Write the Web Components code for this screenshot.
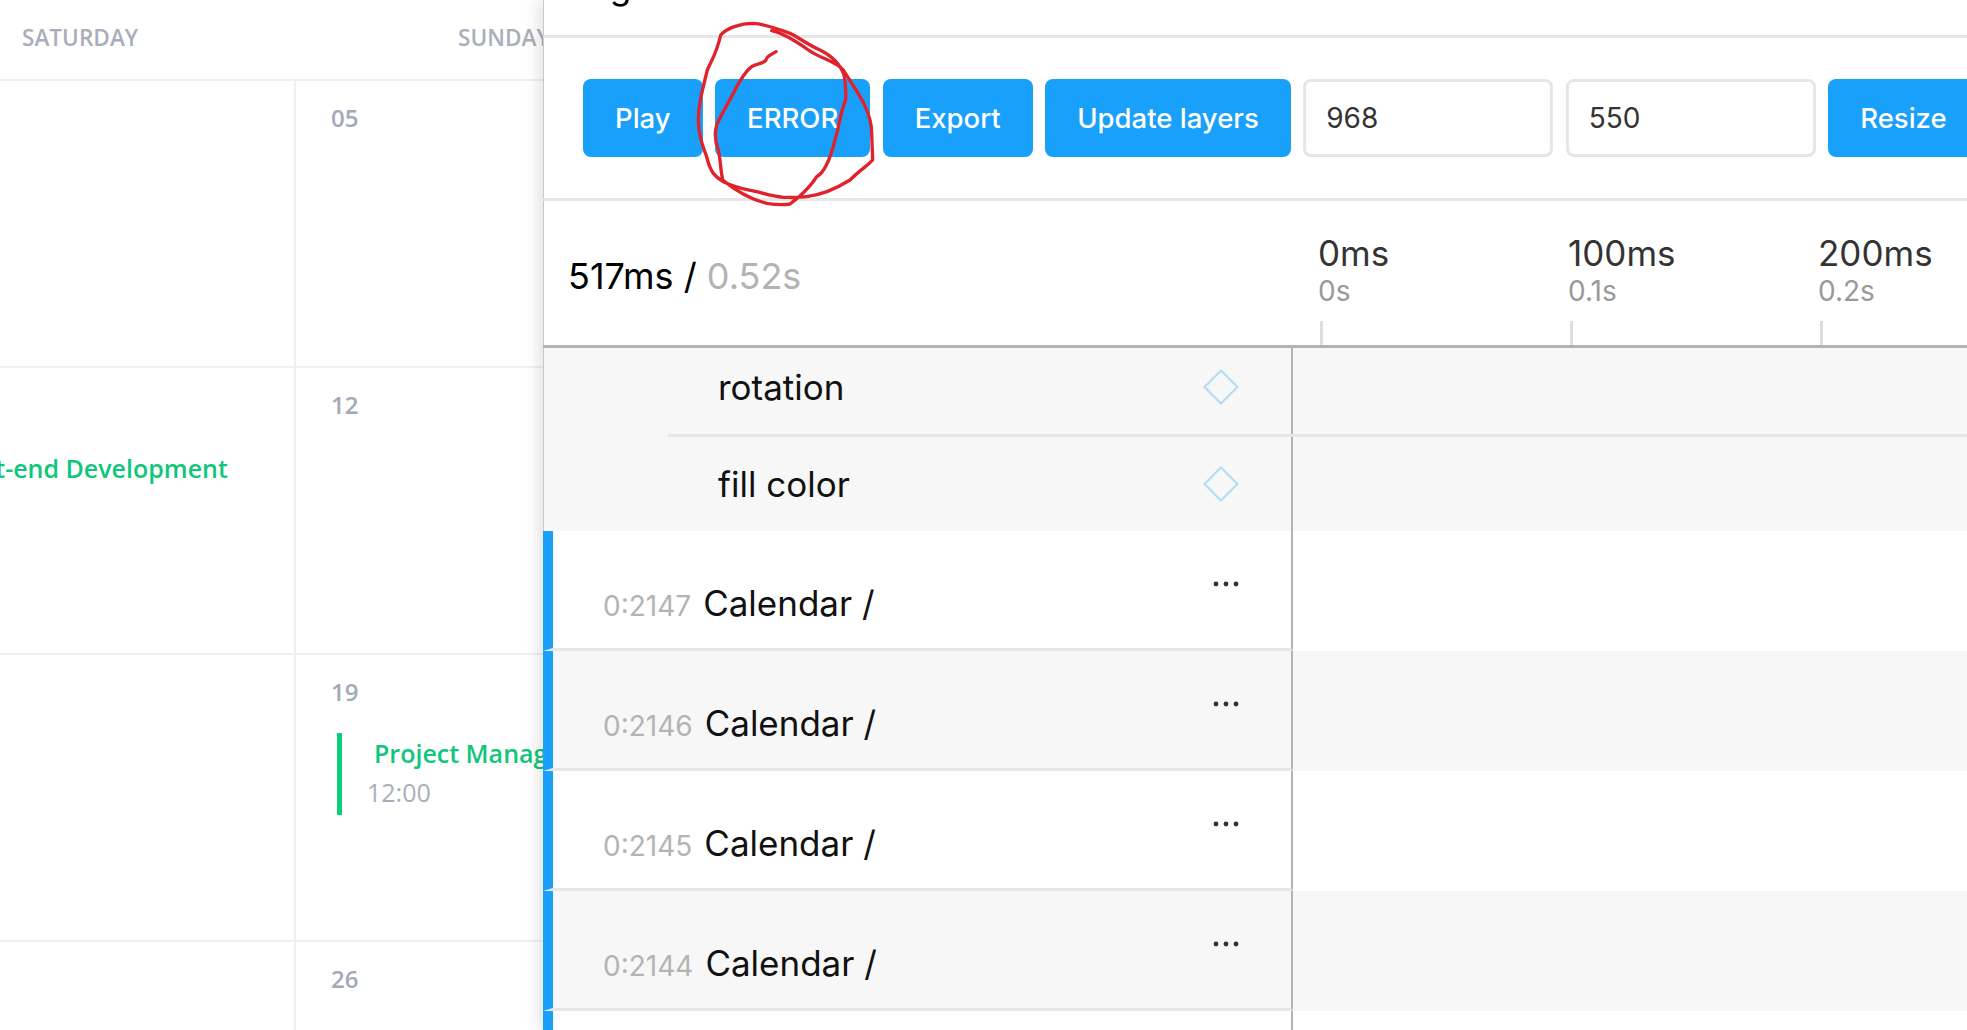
<!DOCTYPE html>
<html lang="en">
<head>
<meta charset="utf-8">
<title>Calendar with animation panel</title>
<style>
    html, body { margin: 0; height: 100%; overflow: hidden; background: #fff; }
    body { position: relative; }
</style>
</head>
<body>

<cal-grid>
    <cal-head>SATURDAY</cal-head>
    <cal-head>SUNDAY</cal-head>
    <cal-cell></cal-cell>
    <cal-cell date="05"></cal-cell>
    <cal-cell><cal-event title-text="Front-end Development" time="10:00" style="margin:30px 0 0 8px;--time-shift:4px"></cal-event></cal-cell>
    <cal-cell date="12"></cal-cell>
    <cal-cell></cal-cell>
    <cal-cell date="19"><cal-event title-text="Project Management" time="12:00" marked></cal-event></cal-cell>
    <cal-cell></cal-cell>
    <cal-cell date="26"></cal-cell>
</cal-grid>

<anim-panel>
    <ui-button slot="tools">Play</ui-button>
    <ui-button slot="tools">ERROR</ui-button>
    <ui-button slot="tools">Export</ui-button>
    <ui-button slot="tools">Update layers</ui-button>
    <num-field slot="tools" value="968"></num-field>
    <num-field slot="tools" value="550"></num-field>
    <ui-button slot="tools">Resize</ui-button>

    <time-tick slot="ticks" ms="0ms" sec="0s"></time-tick>
    <time-tick slot="ticks" ms="100ms" sec="0.1s"></time-tick>
    <time-tick slot="ticks" ms="200ms" sec="0.2s"></time-tick>

    <prop-row name="rotation" style="height:96px"></prop-row>
    <prop-row name="fill color" style="height:94px" last></prop-row>
    <layer-row node="0:2147" name="Calendar /"></layer-row>
    <layer-row node="0:2146" name="Calendar /" alt></layer-row>
    <layer-row node="0:2145" name="Calendar /"></layer-row>
    <layer-row node="0:2144" name="Calendar /" alt></layer-row>
    <layer-row></layer-row>
</anim-panel>

<red-scribble></red-scribble>

<script>
    // small helper, every element gets an open shadow root from a string
    function define(tag, html, Base) {
        const t = document.createElement('template');
        t.innerHTML = html;
        customElements.define(tag, class extends (Base || HTMLElement) {
            constructor() {
                super();
                this.attachShadow({mode: 'open'}).appendChild(t.content.cloneNode(true));
            }
            connectedCallback() {
                if (this.fill) this.fill(this.shadowRoot);
            }
        });
    }

    const calFont = `font-family: "Open Sans", sans-serif;`;
    const uiFont = `font-family: Inter, sans-serif;`;

    define('cal-grid', `
        <style>
            :host {
                display: grid;
                grid-template-columns: 436px 436px;
                grid-template-rows: 79px repeat(4, 287px);
                margin-left: -140px;
                width: 872px;
                height: 100vh;
                overflow: hidden;
            }
        </style>
        <slot></slot>`);

    define('cal-head', `
        <style>
            :host {
                display: flex;
                align-items: center;
                height: 79px;
                padding: 0 0 4px 162px;
                box-sizing: border-box;
                ${calFont}
                font-size: 22.6px;
                font-weight: 600;
                color: #a9aebb;
                white-space: nowrap;
            }
        </style>
        <slot></slot>`);

    class CalCell extends HTMLElement {
        fill(root) {
            root.querySelector('.date').textContent = this.getAttribute('date') || '';
        }
    }
    define('cal-cell', `
        <style>
            :host {
                display: block;
                box-sizing: border-box;
                border-top: 2px solid #eff0f5;
                padding: 24px 0 0 35px;
                ${calFont}
            }
            :host(:nth-of-type(odd)) { border-right: 2px solid #eff0f5; }
            .date {
                height: 26px;
                line-height: 26px;
                font-size: 24px;
                font-weight: 600;
                color: #a3a9b8;
            }
        </style>
        <div class="date"></div>
        <slot></slot>`, CalCell);

    class CalEvent extends HTMLElement {
        fill(root) {
            root.querySelector('.title').textContent = this.getAttribute('title-text');
            root.querySelector('.time').textContent = this.getAttribute('time');
            if (!this.hasAttribute('marked')) root.querySelector('.wrap').classList.add('plain');
        }
    }
    define('cal-event', `
        <style>
            :host { display: block; margin: 28px 0 0 6px; white-space: nowrap; ${calFont} }
            .wrap {
                box-sizing: border-box;
                height: 82px;
                border-left: 5px solid #0bd078;
                padding-left: 25px;
            }
            .wrap.plain { border-left-color: transparent; }
            .title {
                margin-left: 7px;
                height: 41px;
                line-height: 41px;
                font-size: 25px;
                font-weight: 600;
                color: #10c67b;
            }
            .time {
                margin-left: var(--time-shift, 0);
                line-height: 36px;
                font-size: 25px;
                color: #a9aebb;
            }
        </style>
        <div class="wrap"><div class="title"></div><div class="time"></div></div>`, CalEvent);

    define('anim-panel', `
        <style>
            :host {
                position: absolute;
                top: 0;
                bottom: 0;
                left: 543px;
                right: 0;
                display: flex;
                flex-direction: column;
                overflow: hidden;
                background: #fff;
                box-shadow: -4px 0 14px rgba(0, 0, 0, .12);
                ${uiFont}
            }
            .top {
                flex: none;
                height: 35px;
                border-bottom: 3px solid #e6e6e6;
                box-shadow: inset 1px 0 0 #c9c9c9;
                overflow: hidden;
            }
            .top span {
                display: block;
                margin: -35px 0 0 26px;
                line-height: 42px;
                font-size: 35px;
            }
            .tools {
                flex: none;
                display: flex;
                gap: 12.5px;
                height: 160px;
                box-sizing: content-box;
                padding-left: 40px;
                align-items: center;
                border-bottom: 3px solid #e6e6e6;
                box-shadow: inset 1px 0 0 #c9c9c9;
            }
            .head {
                flex: none;
                display: flex;
                height: 144px;
                border-bottom: 3px solid #b3b3b3;
                box-shadow: inset 1px 0 0 #c9c9c9;
            }
            .total {
                flex: none;
                width: 750px;
                padding: 54px 0 0 25px;
                box-sizing: border-box;
                line-height: 42px;
                font-size: 36px;
                color: #000;
            }
            .total span { color: #b3b3b3; }
            .ticks { display: flex; margin-left: 25px; }
            .list {
                flex: 1;
                min-height: 0;
                overflow: hidden;
            }
            .scroll { margin-top: -7px; }
        </style>
        <div class="top"><span>Log</span></div>
        <div class="tools"><slot name="tools"></slot></div>
        <div class="head">
            <div class="total">517ms / <span>0.52s</span></div>
            <div class="ticks"><slot name="ticks"></slot></div>
        </div>
        <div class="list"><div class="scroll"><slot></slot></div></div>`);

    define('ui-button', `
        <style>
            :host {
                flex: none;
                display: flex;
                align-items: center;
                height: 78px;
                padding: 0 32px;
                border-radius: 8px;
                background: #18a0fb;
                color: #fff;
                font-size: 27.5px;
                font-weight: 500;
                white-space: nowrap;
            }
        </style>
        <slot></slot>`);

    class NumField extends HTMLElement {
        fill(root) { root.querySelector('input').value = this.getAttribute('value'); }
    }
    define('num-field', `
        <style>
            :host { flex: none; display: block; width: 250px; height: 78px; }
            input {
                box-sizing: border-box;
                width: 100%;
                height: 100%;
                margin: 0;
                padding: 0 20px;
                border: 3px solid #e6e6e6;
                border-radius: 8px;
                outline: none;
                background: #fff;
                color: #333;
                font: 400 28px Inter, sans-serif;
            }
        </style>
        <input type="text">`, NumField);

    class TimeTick extends HTMLElement {
        fill(root) {
            root.querySelector('.ms').textContent = this.getAttribute('ms');
            root.querySelector('.sec').textContent = this.getAttribute('sec');
        }
    }
    define('time-tick', `
        <style>
            :host {
                flex: none;
                display: flex;
                flex-direction: column;
                width: 250px;
                box-sizing: border-box;
                padding-top: 31px;
                white-space: nowrap;
            }
            .ms { line-height: 42px; font-size: 35px; color: #333; }
            .sec { line-height: 34px; font-size: 28px; color: #999; }
            .mark { margin: auto 0 0 2px; width: 2.5px; height: 24px; background: #ddd; }
        </style>
        <div class="ms"></div>
        <div class="sec"></div>
        <div class="mark"></div>`, TimeTick);

    class PropRow extends HTMLElement {
        fill(root) {
            root.querySelector('.name').textContent = this.getAttribute('name');
            if (this.hasAttribute('last')) root.querySelector('.line').style.display = 'none';
        }
    }
    define('prop-row', `
        <style>
            :host {
                position: relative;
                display: flex;
                box-sizing: border-box;
                background: #f7f7f7;
                box-shadow: inset 1px 0 0 #c9c9c9;
            }
            .cell {
                flex: none;
                display: flex;
                align-items: center;
                justify-content: space-between;
                box-sizing: border-box;
                width: 750px;
                padding: 0 52px 0 175px;
                border-right: 2px solid #b3b3b3;
            }
            :host(:not([last])) .cell { padding-bottom: 5px; }
            .name { font-size: 35px; color: #111; line-height: 42px; }
            .line {
                position: absolute;
                left: 125px;
                right: 0;
                bottom: 0;
                height: 3px;
                background: #e6e6e6;
            }
            svg { display: block; }
        </style>
        <div class="cell">
            <div class="name"></div>
            <svg width="36" height="36" viewBox="0 0 36 36"><path d="M18 1.5 34.5 18 18 34.5 1.5 18Z" fill="none" stroke="#b4def7" stroke-width="2.2"/></svg>
        </div>
        <div class="line"></div>`, PropRow);

    class LayerRow extends HTMLElement {
        fill(root) {
            if (!this.hasAttribute('name')) { root.querySelector('.cell').textContent = ''; return; }
            root.querySelector('.node').textContent = this.getAttribute('node');
            root.querySelector('.name').textContent = this.getAttribute('name');
        }
    }
    define('layer-row', `
        <style>
            :host { display: flex; height: 120px; background: #fff; }
            :host([alt]) { background: #f7f7f7; }
            .cell {
                flex: none;
                display: flex;
                justify-content: space-between;
                box-sizing: border-box;
                width: 750px;
                height: 120px;
                padding: 51px 52px 0 50px;
                border-left: 10px solid #18a0fb;
                border-right: 2px solid #b3b3b3;
                border-bottom: 3px solid #e6e6e6;
            }
            .text { display: flex; align-items: baseline; gap: 12px; height: 42px; }
            .node { font-size: 28px; color: #b3b3b3; }
            .name { font-size: 35px; line-height: 42px; color: #111; }
            svg { display: block; margin-top: -1px; }
        </style>
        <div class="cell">
            <div class="text"><span class="node"></span><span class="name"></span></div>
            <svg width="26" height="6" viewBox="0 0 26 6" fill="#333"><circle cx="3" cy="3" r="2.4"/><circle cx="13" cy="3" r="2.4"/><circle cx="23" cy="3" r="2.4"/></svg>
        </div>`, LayerRow);

    define('red-scribble', `
        <style>
            :host {
                position: absolute;
                left: 680px;
                top: 0;
                width: 220px;
                height: 220px;
                pointer-events: none;
            }
            svg { display: block; }
        </style>
        <svg width="220" height="220" viewBox="0 0 660 660" fill="none" stroke="#e0222c" stroke-width="10" stroke-linejoin="round" stroke-linecap="round">
            <path d="M275 92 C310 100 350 125 385 150 S470 185 490 210 C530 275 575 330 575 400 L578 480 C560 500 545 505 510 540 C470 565 420 585 380 590 C350 594 330 592 310 592 C280 590 250 580 230 575 C200 568 170 565 130 545 C105 530 90 515 80 470 C65 430 55 400 55 360 C55 320 62 290 82 210 C95 180 110 160 122 105 C140 85 180 70 220 70 C250 72 290 85 330 100 C360 115 385 135 420 150 C450 165 480 190 492 225 C500 260 497 285 497 300 C480 340 480 370 465 420 C450 480 430 520 410 530 C395 555 360 590 345 600 L330 612 C310 615 290 615 260 610 C220 600 170 575 128 540 C122 510 120 470 115 450 C105 425 103 400 110 375 C125 340 145 310 160 280 C175 250 195 215 215 200 C230 190 250 192 258 180 C258 172 270 165 288 155"/>
        </svg>`);
</script>
</body>
</html>
